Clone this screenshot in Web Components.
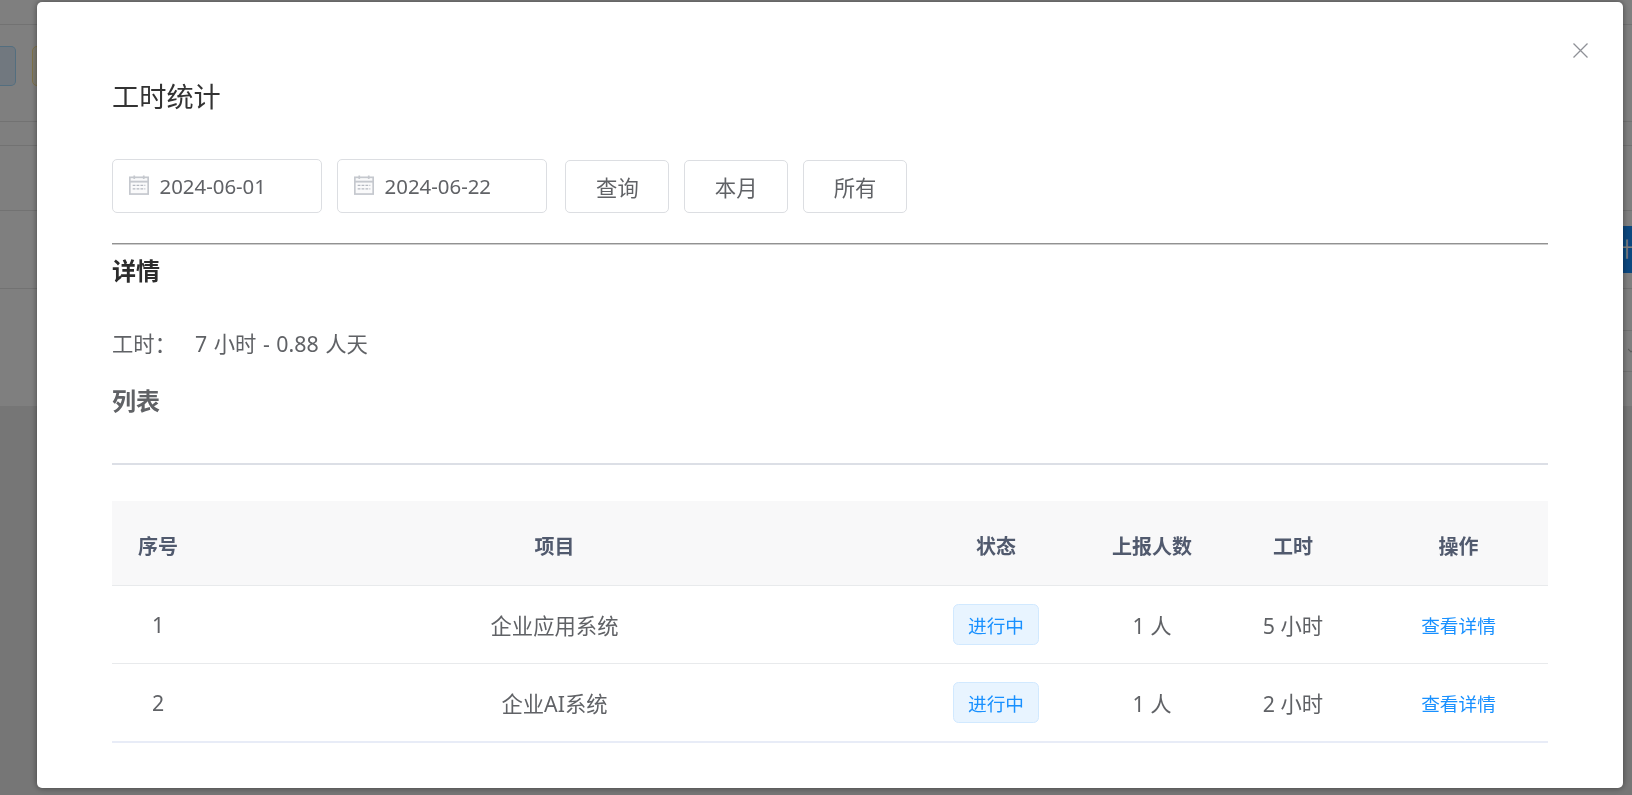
<!DOCTYPE html>
<html lang="zh">
<head>
<meta charset="utf-8">
<title>工时统计</title>
<style>
  html, body { margin: 0; height: 100%; overflow: hidden; }
  body { font-family: "Noto Sans", "Noto Sans CJK SC", sans-serif; background: #ececec; }
</style>
</head>
<body>
<page-behind></page-behind>
<stats-modal>
  <span slot="title">工时统计</span>
  <date-input value="2024-06-01"></date-input>
  <date-input value="2024-06-22" style="margin-left:.8px"></date-input>
  <plain-button style="margin-left:4px">查询</plain-button>
  <plain-button>本月</plain-button>
  <plain-button>所有</plain-button>
</stats-modal>

<script>
class PageBehind extends HTMLElement {
  connectedCallback() {
    this.attachShadow({ mode: 'open' });
    this.shadowRoot.innerHTML = `
      <style>
        :host { display: block; background: #fff; height: 406px; overflow: hidden; }
        .row { border-bottom: 1px solid #e4e4e4; box-sizing: border-box; display: flex; }
        .tools { padding-top: 21px; gap: 16px; }
        .btn { height: 40px; box-sizing: border-box; border-radius: 5px; }
        .blue { width: 16px; background: #e2f1ff; border: 1px solid #a6dcff; border-left: 0; border-radius: 0 5px 5px 0; }
        .yellow { width: 40px; background: #fffbe6; border: 1px solid #ffe58f; }
        .action { justify-content: flex-end; align-items: center; }
        .primary { width: 32px; height: 47px; background: #1890ff; color: #fff; font-size: 20px; line-height: 47px; padding-left: 13.4px; box-sizing: border-box; overflow: hidden; white-space: nowrap; }
        .side { margin-left: 1000px; }
        .mark { justify-content: flex-end; align-items: center; }
      </style>
      <div class="row" style="height:25px"></div>
      <div class="row tools" style="height:97px"><div class="btn blue"></div><div class="btn yellow"></div></div>
      <div class="row" style="height:24px"></div>
      <div class="row" style="height:65px"></div>
      <div class="row action" style="height:78px"><div class="primary">计</div></div>
      <div class="row side" style="height:42px"></div>
      <div class="row side mark" style="height:41px"><svg width="4" height="6" viewBox="0 0 4 6"><path d="M0 1l3 3 1-1" fill="none" stroke="#bbb" stroke-width="1.2"/></svg></div>
    `;
  }
}

class StatsModal extends HTMLElement {
  connectedCallback() {
    this.attachShadow({ mode: 'open' });
    this.shadowRoot.innerHTML = `
      <style>
        .mask { position: fixed; inset: 0; background: rgba(0,0,0,.5); }
        .dialog {
          position: fixed; left: 37px; top: 2px; width: 1586px; height: 786px;
          box-sizing: border-box; padding: 77px 75px 0 75px;
          background: #fff; border-radius: 5px; box-shadow: 0 0 6px rgba(0,0,0,.45);
        }
        .close { position: absolute; left: 1536px; top: 41px; width: 15px; height: 15px; }
        .title { font-size: 27.2px; line-height: 36px; color: #333; height: 36px; }
        .tools { display: flex; align-items: center; gap: 14.8px; margin-top: 44px; height: 54px; }
        .rule { height: 1px; background: #929292; border-bottom: 1px solid #cdcdcd; margin-top: 30px; }
        h3 { margin: 0; font-size: 24px; line-height: 32px; font-weight: 700; }
        .detail { color: #2c2c2c; margin-top: 10px; }
        .hours { margin-top: 43px; font-size: 21.33px; line-height: 28px; color: #606266; display: flex; word-spacing: 1px; }
        .hours b { font-weight: 400; width: 83px; }
        .list { color: #606266; margin-top: 27px; }
        .rule2 { height: 2px; background: #dcdfe6; margin-top: 46px; }
        stat-table { margin-top: 36px; }
      </style>
      <div class="mask"></div>
      <div class="dialog">
        <svg class="close" viewBox="0 0 15 15"><path d="M.5.5l14 14M14.5.5l-14 14" fill="none" stroke="#8f9197" stroke-width="1.3"/></svg>
        <div class="title"><slot name="title"></slot></div>
        <div class="tools"><slot></slot></div>
        <div class="rule"></div>
        <h3 class="detail">详情</h3>
        <div class="hours"><b>工时：</b><span>7 小时 - 0.88 人天</span></div>
        <h3 class="list">列表</h3>
        <div class="rule2"></div>
        <stat-table></stat-table>
      </div>
    `;
  }
}

class DateInput extends HTMLElement {
  connectedCallback() {
    this.attachShadow({ mode: 'open' });
    this.shadowRoot.innerHTML = `
      <style>
        :host { display: flex; align-items: center; gap: 10.5px; box-sizing: border-box; width: 209.5px; height: 53.5px; padding-left: 16px; border: 1.3px solid #dcdee2; border-radius: 5px; font-size: 20.4px; color: #606266; }
        svg { width: 20px; height: 20px; flex: none; margin-top: -3px; }
      </style>
      <svg viewBox="0 0 19 19" fill="none" stroke="#c5c8ce">
        <rect x=".8" y="2.2" width="17.4" height="15.9" fill="#fafafb" stroke-width="1.6"/>
        <path d="M.7 6.3h17.6" stroke-width="1.8"/>
        <path d="M5 .4v3.4M14 .4v3.4" stroke-width="1.6"/>
        <path d="M3.5 9.9h12M3.5 13.2h12" stroke="#b4b8c0" stroke-width="1.3" stroke-dasharray="2.6 1.1"/>
      </svg>
      <span>${this.getAttribute('value')}</span>
    `;
  }
}

class PlainButton extends HTMLElement {
  connectedCallback() {
    this.attachShadow({ mode: 'open' });
    this.shadowRoot.innerHTML = `
      <style>
        :host { display: flex; align-items: center; justify-content: center; box-sizing: border-box; width: 104px; height: 53px; margin-top: 1px; border: 1.3px solid #dcdee2; border-radius: 5px; font-size: 21.33px; color: #606266; }
      </style>
      <slot></slot>
    `;
  }
}

class StatusTag extends HTMLElement {
  connectedCallback() {
    this.attachShadow({ mode: 'open' });
    this.shadowRoot.innerHTML = `
      <style>
        :host { display: inline-flex; align-items: center; justify-content: center; box-sizing: border-box; width: 86.5px; height: 41.5px; margin-top: 1px; background: #e8f4ff; border: 1.3px solid #d1e9ff; border-radius: 5.5px; color: #1890ff; font-size: 18.67px; }
      </style>
      <slot></slot>
    `;
  }
}

class StatTable extends HTMLElement {
  connectedCallback() {
    const rows = [
      ['1', '企业应用系统', '1 人', '5 小时'],
      ['2', '企业AI系统', '1 人', '2 小时'],
    ];
    this.attachShadow({ mode: 'open' });
    this.shadowRoot.innerHTML = `
      <style>
        :host { display: block; }
        .row { display: grid; grid-template-columns: 92px 701px 182px 130px 152px 1fr; align-items: center; justify-items: center; border-bottom: 1.3px solid #e8eaec; height: 78px; box-sizing: border-box; font-size: 21.33px; color: #606266; }
        .head { height: 84.7px; padding-top: 6px; background: #f8f8f9; color: #515a6e; font-weight: 700; font-size: 20px; }
        .row:last-child { border-bottom: 2px solid #e8ecf7; height: 79px; }
        a { color: #1890ff; font-size: 18.67px; text-decoration: none; }
      </style>
      <div class="row head"><div>序号</div><div>项目</div><div>状态</div><div>上报人数</div><div>工时</div><div>操作</div></div>
      ${rows.map(r => `
        <div class="row">
          <div>${r[0]}</div><div>${r[1]}</div>
          <status-tag>进行中</status-tag>
          <div>${r[2]}</div><div>${r[3]}</div>
          <a href="#">查看详情</a>
        </div>`).join('')}
    `;
  }
}

customElements.define('page-behind', PageBehind);
customElements.define('stats-modal', StatsModal);
customElements.define('date-input', DateInput);
customElements.define('plain-button', PlainButton);
customElements.define('status-tag', StatusTag);
customElements.define('stat-table', StatTable);
</script>
</body>
</html>
